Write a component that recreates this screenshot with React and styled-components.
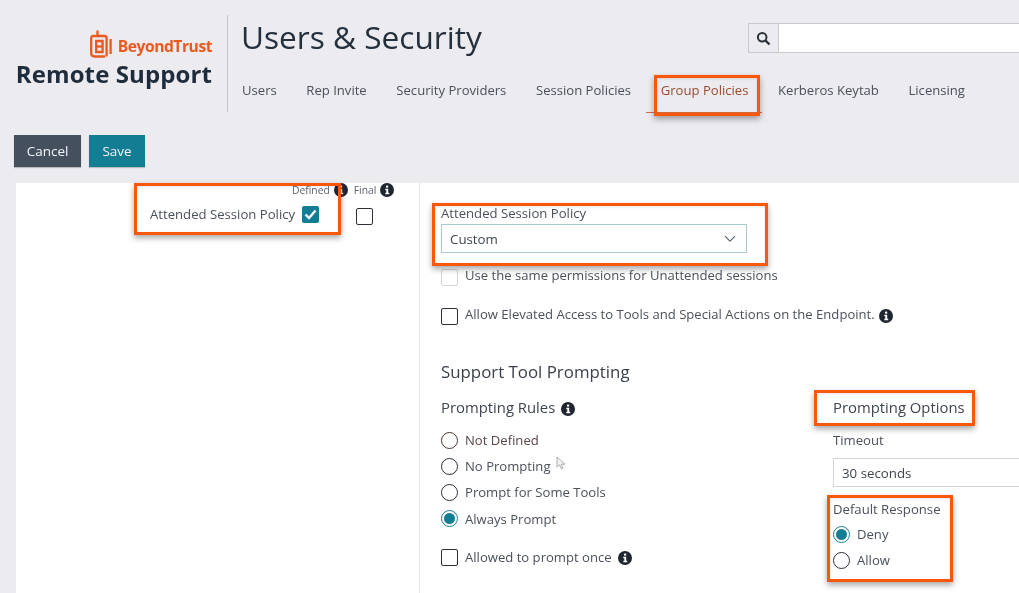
import React from "react";
import styled, { createGlobalStyle } from "styled-components";

const Global = createGlobalStyle`
  html, body { margin: 0; padding: 0; background: #ecebef; }
  body { font-family: "Open Sans", "Noto Sans", sans-serif; color: #3f4650; }
  * { box-sizing: border-box; }
`;

const Page = styled.div`
  position: relative;
  width: 1019px;
  height: 593px;
  overflow: hidden;
  background: #ecebef;
  filter: blur(0.3px);
`;
const Header = styled.header`
  display: flex;
  height: 135px;
  padding-top: 15px;
`;
const Brand = styled.div`
  width: 228px;
  height: 97px;
  padding: 14px 15px 0 0;
  border-right: 1px solid #c4c5c8;
  display: flex;
  flex-direction: column;
  align-items: flex-end;
`;
const LogoRow = styled.div`
  display: flex;
  align-items: center;
  gap: 6px;
  height: 29px;
`;
const LogoText = styled.span`
  font-size: 15.6px;
  font-weight: 700;
  letter-spacing: -0.45px;
  color: #ea5a1e;
  margin-top: 5px;
`;
const Product = styled.div`
  font-size: 24px;
  font-weight: 700;
  line-height: 32px;
  letter-spacing: 0.1px;
  color: #1f2c3b;
`;
const HeadMain = styled.div`
  flex: 1;
  padding-left: 13px;
  min-width: 0;
`;
const TitleRow = styled.div`
  display: flex;
  align-items: flex-start;
  height: 62px;
`;
const Title = styled.h1`
  margin: 0;
  width: 507px;
  font-size: 31.6px;
  line-height: 44px;
  font-weight: 400;
  color: #25303d;
`;
const Search = styled.div`
  display: flex;
  flex: 1;
  height: 30px;
  margin-top: 8px;
  border: 1px solid #c9c9ce;
  border-right: 0;
`;
const SearchIcon = styled.div`
  width: 30px;
  display: flex;
  align-items: center;
  justify-content: center;
  background: #ecebef;
  border-right: 1px solid #c9c9ce;
`;
const SearchInput = styled.div`
  flex: 1;
  background: #fff;
`;
const Nav = styled.nav`
  display: flex;
  gap: 29.6px;
  padding-left: 1px;
`;
const NavItem = styled.a`
  position: relative;
  font-size: 13.1px;
  line-height: 26px;
  color: ${(p) => (p.$active ? "#9a4a33" : "#4a505a")};
  ${(p) =>
    p.$active &&
    `&::after {
      content: "";
      position: absolute;
      left: -15px;
      right: -14px;
      bottom: -10px;
      height: 1px;
      background: #d5693f;
    }`}
`;
const Actions = styled.div`
  display: flex;
  gap: 8px;
  padding-left: 14px;
  height: 48px;
`;
const Button = styled.button`
  height: 32px;
  width: ${(p) => p.$w}px;
  border: 0;
  padding: 0;
  font: 400 13.5px "Open Sans", sans-serif;
  color: #f2f5f7;
  background: ${(p) => p.$bg};
  box-shadow: 0 1px 1px rgba(0, 0, 0, 0.2);
`;
const Panel = styled.main`
  display: flex;
  height: 410px;
  margin-left: 16px;
  background: #fff;
`;
const LeftCol = styled.section`
  width: 404px;
  border-right: 1px solid #e3e3e6;
  padding-left: 134px;
`;
const FlagHead = styled.div`
  display: flex;
  align-items: center;
  height: 14px;
  padding-left: 142px;
`;
const FlagLabel = styled.span`
  font-size: 10.3px;
  color: #5a606a;
  margin-right: 4px;
  margin-left: ${(p) => p.$ml || 0}px;
`;
const PolicyRow = styled.div`
  display: flex;
  align-items: center;
  margin-top: 6px;
`;
const PolicyText = styled.span`
  font-size: 13.15px;
  line-height: 18px;
  width: 152px;
  color: #4a505a;
`;
const Box = styled.span`
  display: inline-block;
  flex: none;
  width: 17px;
  height: 17px;
  border-radius: 2px;
  border: 1.5px solid ${(p) => p.$line || "#2b3038"};
  margin-top: ${(p) => p.$mt || 0}px;
  margin-left: ${(p) => p.$ml || 0}px;
`;
const CheckedBox = styled.span`
  display: flex;
  flex: none;
  align-items: center;
  justify-content: center;
  width: 17px;
  height: 17px;
  border-radius: 2px;
  background: #137d94;
`;
const RightCol = styled.section`
  flex: 1;
  padding: 21px 0 0 21px;
  min-width: 0;
`;
const FieldLabel = styled.div`
  font-size: 13.15px;
  line-height: 18px;
  color: #4a505a;
  margin-top: ${(p) => p.$mt || 0}px;
`;
const Select = styled.div`
  display: flex;
  align-items: center;
  justify-content: space-between;
  width: ${(p) => p.$w};
  height: 29px;
  margin-top: ${(p) => p.$mt || 0}px;
  padding: 0 10px 0 8px;
  font-size: 13.3px;
  color: #3f4650;
  border: 1px solid ${(p) => p.$line};
  border-right-width: ${(p) => (p.$open ? 0 : 1)}px;
`;
const CheckRow = styled.div`
  display: flex;
  align-items: flex-start;
  gap: 7px;
  margin-top: ${(p) => p.$mt}px;
  font-size: 13.1px;
  line-height: 18px;
  color: #4a505a;
`;
const Info = styled.span`
  display: inline-flex;
  vertical-align: middle;
  margin-left: ${(p) => p.$ml || 0}px;
`;
const Section = styled.h2`
  margin: 35px 0 0;
  font-size: 16.85px;
  line-height: 24px;
  font-weight: 400;
  color: #3a414b;
`;
const Columns = styled.div`
  display: grid;
  grid-template-columns: 392px 1fr;
  margin-top: 12px;
`;
const SubHead = styled.div`
  font-size: 14.85px;
  line-height: 22px;
  color: #3f4650;
`;
const Radios = styled.div`
  display: flex;
  flex-direction: column;
  gap: ${(p) => p.$gap}px;
  margin-top: ${(p) => p.$mt}px;
`;
const RadioRow = styled.label`
  display: flex;
  align-items: center;
  gap: 7px;
  height: 18px;
  font-size: 13.1px;
  color: ${(p) => p.$ink || "#4a505a"};
`;
const Radio = styled.span`
  flex: none;
  position: relative;
  width: 17px;
  height: 17px;
  border-radius: 50%;
  border: 1.5px solid ${(p) => (p.$on ? "#137d94" : p.$line || "#2b3038")};
  ${(p) =>
    p.$on &&
    `&::after {
      content: "";
      position: absolute;
      inset: 2px;
      border-radius: 50%;
      background: #137d94;
    }`}
`;
const Highlight = styled.div`
  position: absolute;
  left: ${(p) => p.$x}px;
  top: ${(p) => p.$y}px;
  width: ${(p) => p.$w}px;
  height: ${(p) => p.$h}px;
  border: 3px solid #f9570a;
  box-shadow: 0 3px 6px rgba(0, 0, 0, 0.35), inset 0 1px 3px rgba(0, 0, 0, 0.1);
  pointer-events: none;
`;
const Cursor = styled.svg`
  position: absolute;
  left: 556px;
  top: 456px;
`;

const InfoIcon = ({ size = 14, ml }) => (
  <Info $ml={ml}>
    <svg width={size} height={size} viewBox="0 0 14 14">
      <circle cx="7" cy="7" r="7" fill="#1f2630" />
      <rect x="6" y="2.6" width="2.2" height="2" fill="#fff" />
      <path d="M5.3 5.8h2.9v4h1v1.4H5.3V9.8h1V7.2h-1z" fill="#fff" />
    </svg>
  </Info>
);

const Chevron = () => (
  <svg width="12" height="8" viewBox="0 0 12 8" fill="none">
    <path d="M1 1.2l5 5 5-5" stroke="#5c6670" strokeWidth="1.2" />
  </svg>
);

const Logo = () => (
  <svg width="22" height="28" viewBox="0 0 22 28" fill="none" stroke="#ea5a1e" strokeWidth="2.3">
    <path d="M7.5 0.5V6H3.2Q1.2 6 1.2 8V23Q1.2 26.5 4.5 26.5H15" />
    <path d="M7.5 6H14.5Q16.6 6 16.6 8V26.5" />
    <path d="M6.2 11H12.6V22H6.2Z" />
    <path d="M6.2 16.5H12.6" />
    <path d="M20.6 9V24" />
  </svg>
);

const tabs = ["Users", "Rep Invite", "Security Providers", "Session Policies", "Group Policies", "Kerberos Keytab", "Licensing"];
const rules = ["Not Defined", "No Prompting", "Prompt for Some Tools", "Always Prompt"];
const marks = [
  { x: 134, y: 183, w: 207, h: 52 },
  { x: 432, y: 203, w: 336, h: 63 },
  { x: 654, y: 75, w: 106, h: 41 },
  { x: 814, y: 390, w: 161, h: 36 },
  { x: 827, y: 495, w: 126, h: 87 },
];

export default function App() {
  return (
    <Page>
      <Global />
      <Header>
        <Brand>
          <LogoRow>
            <Logo />
            <LogoText>BeyondTrust</LogoText>
          </LogoRow>
          <Product>Remote Support</Product>
        </Brand>
        <HeadMain>
          <TitleRow>
            <Title>Users &amp; Security</Title>
            <Search>
              <SearchIcon>
                <svg width="15" height="15" viewBox="0 0 15 15" fill="none" stroke="#2b3038">
                  <circle cx="6.2" cy="6.2" r="4.3" strokeWidth="2" />
                  <path d="M9.5 9.5l4 4" strokeWidth="2.4" />
                </svg>
              </SearchIcon>
              <SearchInput />
            </Search>
          </TitleRow>
          <Nav>
            {tabs.map((t) => (
              <NavItem key={t} $active={t === "Group Policies"}>{t}</NavItem>
            ))}
          </Nav>
        </HeadMain>
      </Header>
      <Actions>
        <Button $w={67} $bg="#44505e">Cancel</Button>
        <Button $w={56} $bg="#137d94">Save</Button>
      </Actions>
      <Panel>
        <LeftCol>
          <FlagHead>
            <FlagLabel>Defined</FlagLabel>
            <InfoIcon />
            <FlagLabel $ml={6}>Final</FlagLabel>
            <InfoIcon />
          </FlagHead>
          <PolicyRow>
            <PolicyText>Attended Session Policy</PolicyText>
            <CheckedBox>
              <svg width="13" height="11" viewBox="0 0 13 11" fill="none">
                <path d="M1.5 5.5l3.5 3.5 6.5-7.5" stroke="#fff" strokeWidth="2.4" />
              </svg>
            </CheckedBox>
            <Box $ml={37} $mt={5} />
          </PolicyRow>
        </LeftCol>
        <RightCol>
          <FieldLabel>Attended Session Policy</FieldLabel>
          <Select $w="306px" $line="#a9c9d2" $mt={2}>
            Custom
            <Chevron />
          </Select>
          <CheckRow $mt={13}>
            <Box $line="#d4d5d8" $mt={3} />
            Use the same permissions for Unattended sessions
          </CheckRow>
          <CheckRow $mt={19}>
            <Box $mt={3} />
            <span>
              Allow Elevated Access to Tools and Special Actions on the Endpoint.
              <InfoIcon ml={4} />
            </span>
          </CheckRow>
          <Section>Support Tool Prompting</Section>
          <Columns>
            <div>
              <SubHead>
                Prompting Rules
                <InfoIcon ml={6} />
              </SubHead>
              <Radios $gap={8.2} $mt={13}>
                {rules.map((r, i) => (
                  <RadioRow key={r} $ink={i === 0 ? "#5a4446" : undefined}>
                    <Radio $on={i === 3} $line={i === 0 ? "#4c3530" : undefined} />
                    {r}
                  </RadioRow>
                ))}
              </Radios>
              <CheckRow $mt={20}>
                <Box $mt={1} />
                <span>
                  Allowed to prompt once
                  <InfoIcon ml={6} />
                </span>
              </CheckRow>
            </div>
            <div>
              <SubHead>Prompting Options</SubHead>
              <FieldLabel $mt={13}>Timeout</FieldLabel>
              <Select $w="100%" $line="#d4d5d8" $mt={9} $open>30 seconds</Select>
              <FieldLabel $mt={13}>Default Response</FieldLabel>
              <Radios $gap={8} $mt={7}>
                <RadioRow>
                  <Radio $on />
                  Deny
                </RadioRow>
                <RadioRow>
                  <Radio />
                  Allow
                </RadioRow>
              </Radios>
            </div>
          </Columns>
        </RightCol>
      </Panel>
      {marks.map((m) => (
        <Highlight key={m.x} $x={m.x} $y={m.y} $w={m.w} $h={m.h} />
      ))}
      <Cursor width="10" height="14" viewBox="0 0 10 14">
        <path d="M1 1v10l2.5-2.2L5.5 13l1.5-.7L5.2 8.2H9z" fill="#f4f4f6" stroke="#9a9ca2" strokeWidth="0.8" />
      </Cursor>
    </Page>
  );
}
